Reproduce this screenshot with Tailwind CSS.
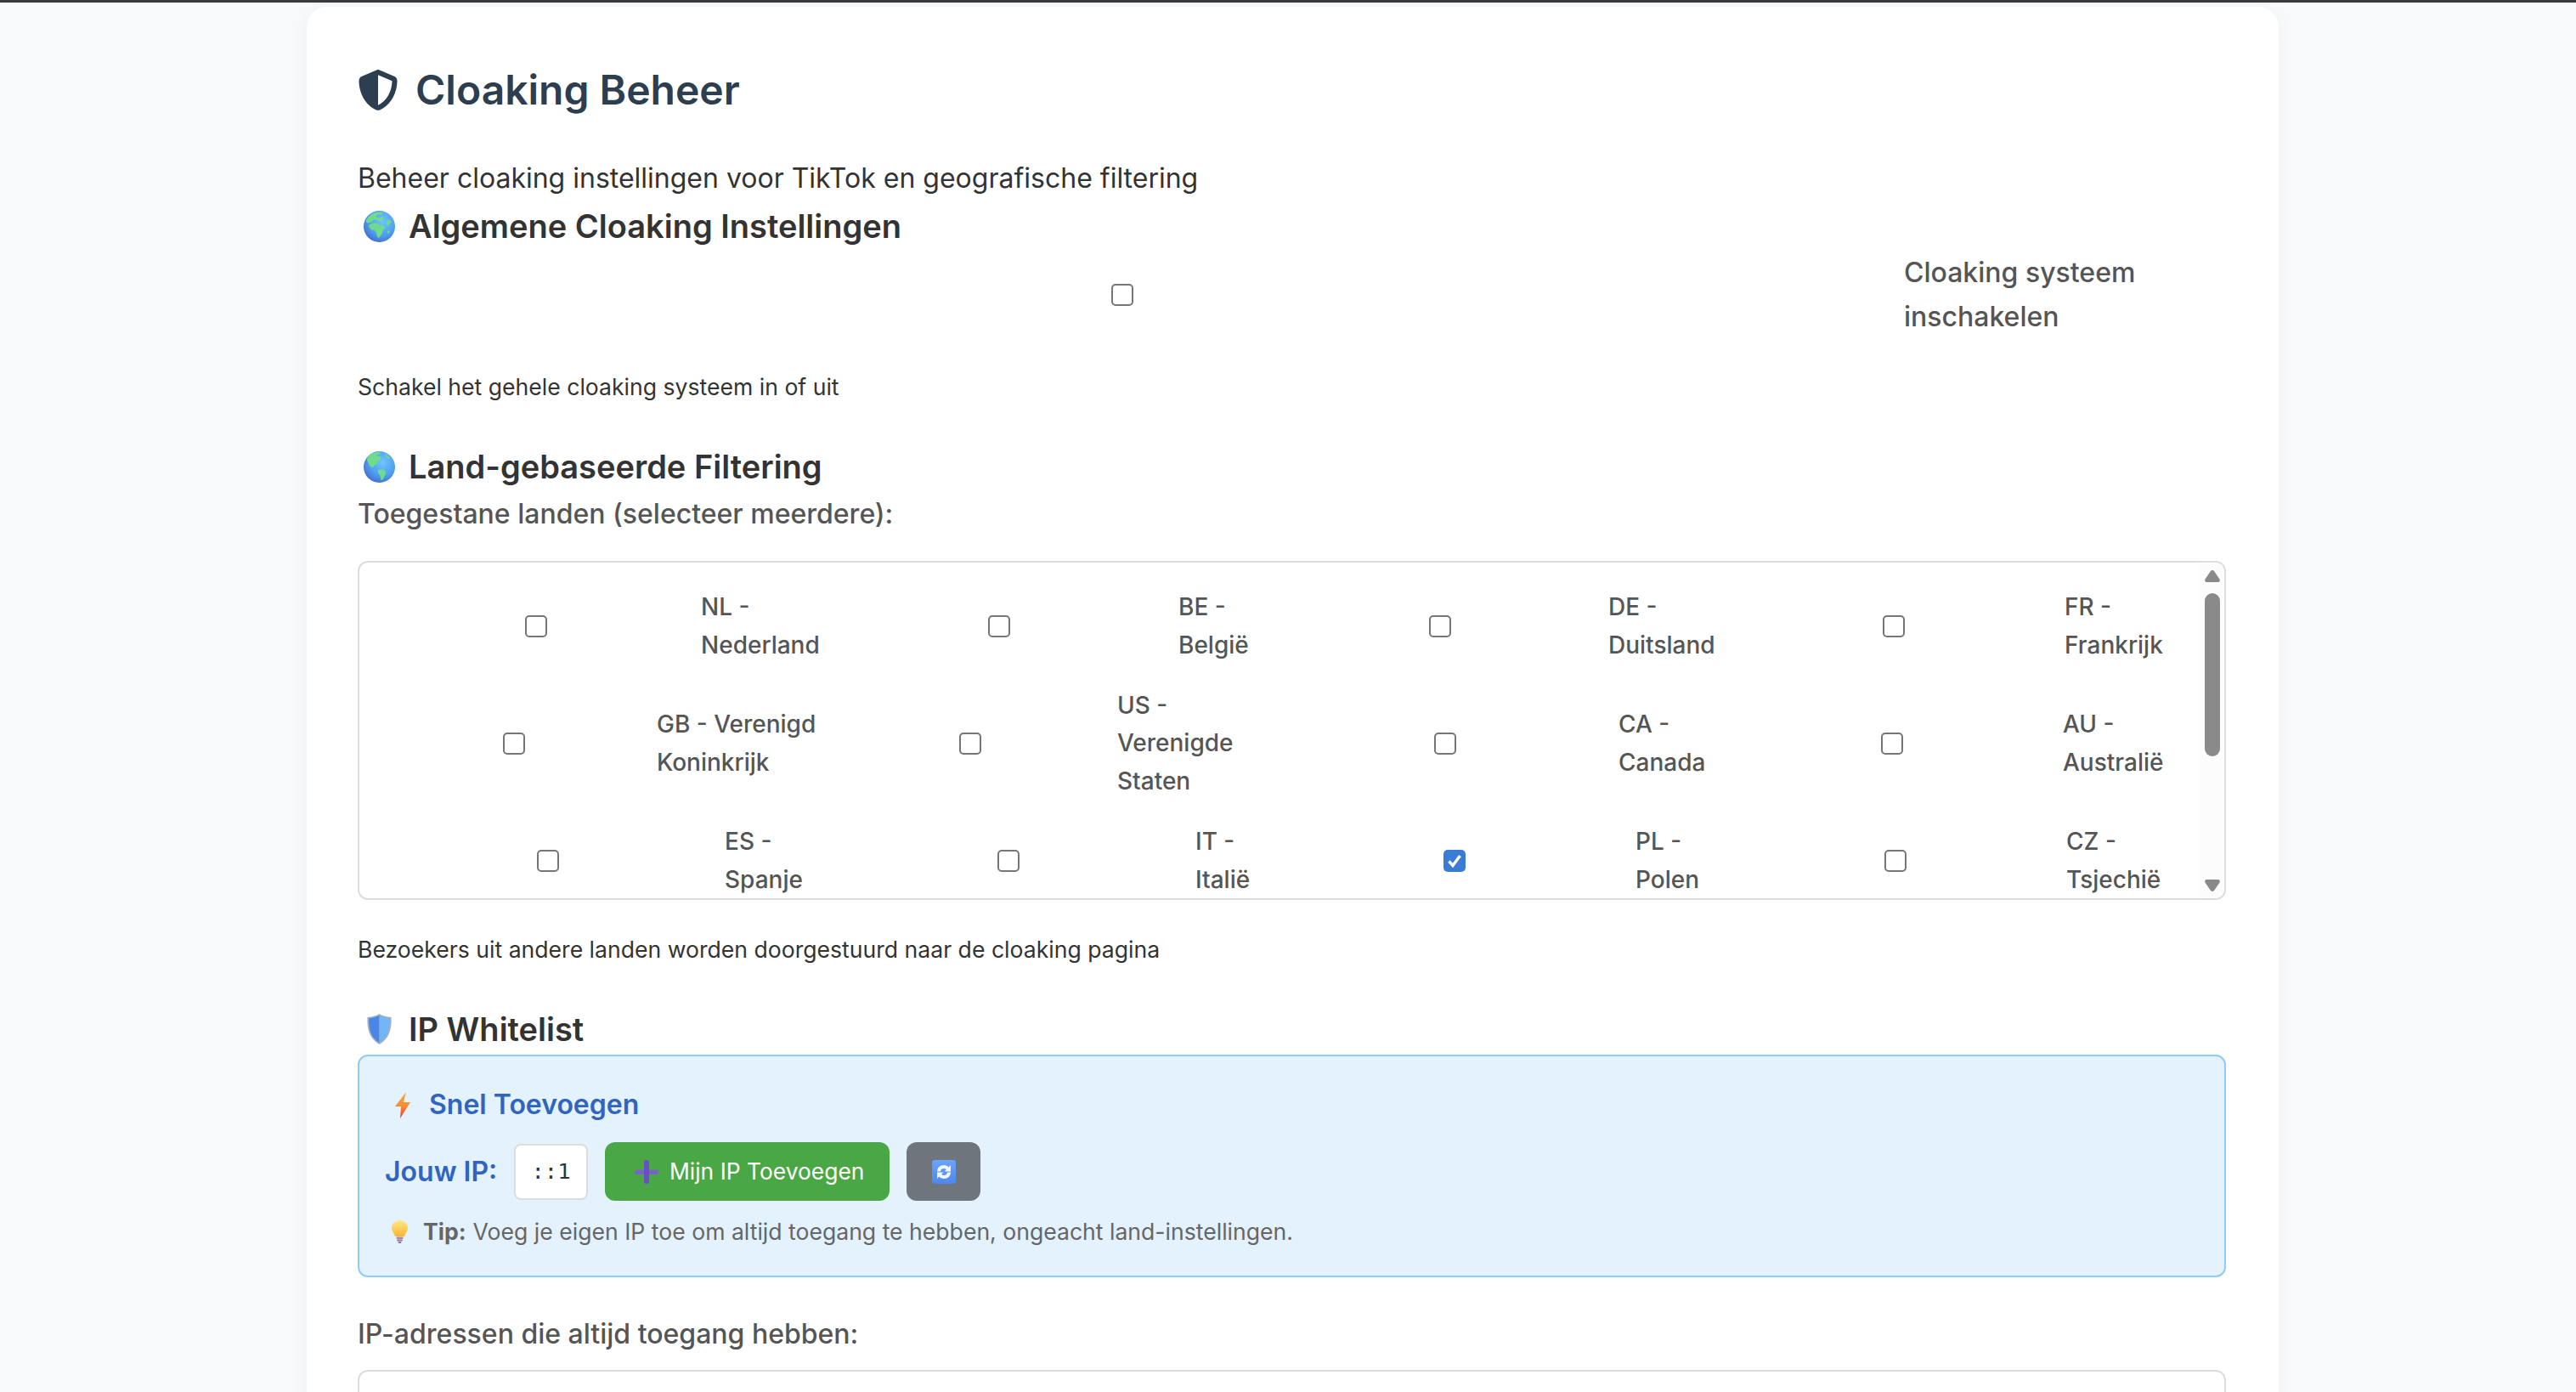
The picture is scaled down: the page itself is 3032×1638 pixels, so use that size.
<!DOCTYPE html>
<html lang="nl">
<head>
    <meta charset="UTF-8">
    <title>Cloaking Beheer</title>
    <script src="https://cdn.jsdelivr.net/npm/@tailwindcss/browser@4"></script>
</head>
<body class="h-[1638px] overflow-hidden bg-[#f8f9fa] font-['Inter',sans-serif]">
    <!-- shared emoji gradients -->
    <svg class="absolute w-0 h-0">
        <defs>
            <radialGradient id="sea" cx="0.6" cy="0.35" r="0.75">
                <stop offset="0" stop-color="#6fc6fb"/><stop offset="0.6" stop-color="#4e9bef"/><stop offset="1" stop-color="#3f62c4"/>
            </radialGradient>
            <linearGradient id="bolt" x1="0" y1="0" x2="0" y2="1">
                <stop offset="0" stop-color="#fbb03b"/><stop offset="0.55" stop-color="#f58a3a"/><stop offset="1" stop-color="#e63d3d"/>
            </linearGradient>
            <linearGradient id="bulb" x1="0" y1="0" x2="0" y2="1">
                <stop offset="0" stop-color="#ffe98a"/><stop offset="1" stop-color="#fbb52e"/>
            </linearGradient>
            <linearGradient id="refresh" x1="0" y1="0" x2="0" y2="1">
                <stop offset="0" stop-color="#6aa5fa"/><stop offset="1" stop-color="#4f86ee"/>
            </linearGradient>
        </defs>
    </svg>

    <div class="h-[3px] bg-[#3a3a3a]"></div>

    <main class="mt-[5px] ml-[361px] w-[2321px] h-[1700px] bg-white rounded-[24px] shadow-[0_4px_20px_rgba(0,0,0,0.04)] pl-[60px] pr-[62px] pt-[68px]">
        <h1 class="flex items-center gap-[20px] h-[60px] text-[48px] leading-[60px] font-semibold text-[#2c3e50]">
            <svg class="w-[48px] h-[48px]" viewBox="0 0 512 512" fill="#2c3e50"><path d="M256 0c4.6 0 9.2 1 13.4 2.9L457.7 82.8c22 9.3 38.4 31 38.3 57.2c-.5 99.2-41.3 280.7-213.6 363.2c-16.7 8-36.1 8-52.8 0C57.3 420.7 16.5 239.2 16 140c-.1-26.2 16.3-47.9 38.3-57.2L242.7 2.9C246.8 1 251.4 0 256 0zm0 66.8V444.8C394 378 431.1 230.1 432 141.4L256 66.8l0 0z"/></svg>
            Cloaking Beheer
        </h1>
        <p class="mt-[48px] text-[32px] leading-[51px] text-[#333]">Beheer cloaking instellingen voor TikTok en geografische filtering</p>

        <h2 class="mt-[7px] flex items-center gap-[16px] pl-[7px] h-[48px] text-[38px] leading-[48px] font-semibold text-[#333]">
            <svg class="w-[37px] h-[37px]" viewBox="0 0 37 37">
                <circle cx="18.5" cy="18.5" r="18.5" fill="url(#sea)"/>
                <path d="M13 2.5c3-1.2 7-1.3 10-.3l-2 2.5-4-.5-3 2.5 3 1.5 5-1 2 2.5-3 2-4 .5-2-2-3 .5-3 3-5 .5-1.500-2C5 7 8.500 4 13 2.500z" fill="#6fdc8c"/>
                <path d="M6 17l5-2.500 5 .5 3 2 4 .5 2 2.500-2 3-1.500 4-3 4.500h-2l-1.500-5-1.500-3.500-4-.5-3-3z" fill="#6fdc8c"/>
                <path d="M27 12l4-1.500 2 3-3 2-1.500 3-1.500-2.500zM28 24l2-1 .5 2.500-2 2z" fill="#6fdc8c"/>
            </svg>
            Algemene Cloaking Instellingen
        </h2>

        <label class="mt-[5px] flex items-center gap-[20px] text-[32px] leading-[52px] font-medium text-[#555]">
            <span class="w-[1800px] flex justify-center"><input type="checkbox" class="appearance-none w-[26px] h-[26px] bg-white border-2 border-[#767676] rounded-[5px]"></span>
            <span class="w-[330px]">Cloaking systeem inschakelen</span>
        </label>
        <p class="mt-[34px] text-[26.6px] leading-[45px] text-[#333]">Schakel het gehele cloaking systeem in of uit</p>

        <h2 class="mt-[47px] flex items-center gap-[16px] pl-[7px] h-[48px] text-[38px] leading-[48px] font-semibold text-[#333]">
            <svg class="w-[37px] h-[37px]" viewBox="0 0 37 37">
                <circle cx="18.500" cy="18.500" r="18.500" fill="url(#sea)"/>
                <path d="M5 6l5-3.500 6-1.500 5 .5-2 2-4 .5 1.500 2 2-.5 2 1.500-1 3-3 2-.5 3-3.500 1.500-1.500 3-3-1.500-2.500-4-1.500-4z" fill="#6fdc8c"/>
                <path d="M17 22l4-1 4 1.500 1.500 3-2 4-2 4-2 .5-1-5-2.500-4z" fill="#6fdc8c"/>
                <path d="M25 3l3 2 4 4-3-.5-3-2.500z" fill="#6fdc8c"/>
            </svg>
            Land-gebaseerde Filtering
        </h2>
        <p class="mt-[6px] text-[32px] leading-[51px] font-medium text-[#555]">Toegestane landen (selecteer meerdere):</p>

        <!-- countries; the column widths differ per row, like in the original -->
        <div class="relative mt-[30px] h-[399px] overflow-hidden border-2 border-[#dddddd] rounded-[12px] pt-[30px] text-[28px] leading-[44.8px] font-medium text-[#555] flex flex-col gap-[26px]">
            <div class="ml-[13px] grid items-center justify-items-start grid-cols-[389px_140px_422px_110px_396px_135px_402px_140px]">
                <input type="checkbox" class="appearance-none w-[26px] h-[26px] bg-white border-2 border-[#767676] rounded-[5px] justify-self-center"><span>NL - Nederland</span>
                <input type="checkbox" class="appearance-none w-[26px] h-[26px] bg-white border-2 border-[#767676] rounded-[5px] justify-self-center"><span>BE - België</span>
                <input type="checkbox" class="appearance-none w-[26px] h-[26px] bg-white border-2 border-[#767676] rounded-[5px] justify-self-center"><span>DE - Duitsland</span>
                <input type="checkbox" class="appearance-none w-[26px] h-[26px] bg-white border-2 border-[#767676] rounded-[5px] justify-self-center"><span>FR - Frankrijk</span>
            </div>
            <div class="ml-[13px] grid items-center justify-items-start grid-cols-[337px_195px_347px_182px_408px_121px_402px_150px]">
                <input type="checkbox" class="appearance-none w-[26px] h-[26px] bg-white border-2 border-[#767676] rounded-[5px] justify-self-center"><span>GB - Verenigd Koninkrijk</span>
                <input type="checkbox" class="appearance-none w-[26px] h-[26px] bg-white border-2 border-[#767676] rounded-[5px] justify-self-center"><span>US - Verenigde Staten</span>
                <input type="checkbox" class="appearance-none w-[26px] h-[26px] bg-white border-2 border-[#767676] rounded-[5px] justify-self-center"><span>CA - Canada</span>
                <input type="checkbox" class="appearance-none w-[26px] h-[26px] bg-white border-2 border-[#767676] rounded-[5px] justify-self-center"><span>AU - Australië</span>
            </div>
            <div class="ml-[13px] grid items-center justify-items-start grid-cols-[417px_114px_440px_92px_426px_105px_402px_140px]">
                <input type="checkbox" class="appearance-none w-[26px] h-[26px] bg-white border-2 border-[#767676] rounded-[5px] justify-self-center"><span>ES - Spanje</span>
                <input type="checkbox" class="appearance-none w-[26px] h-[26px] bg-white border-2 border-[#767676] rounded-[5px] justify-self-center"><span>IT - Italië</span>
                <span class="relative w-[26px] h-[26px] justify-self-center">
                    <input type="checkbox" checked class="appearance-none block w-[26px] h-[26px] bg-[#3a7bd5] rounded-[5px]">
                    <svg class="absolute inset-0 w-[26px] h-[26px]" viewBox="0 0 26 26" fill="none"><path d="M6.500 13.500l4.500 5L19.500 7" stroke="#fff" stroke-width="3.400"/></svg>
                </span><span>PL - Polen</span>
                <input type="checkbox" class="appearance-none w-[26px] h-[26px] bg-white border-2 border-[#767676] rounded-[5px] justify-self-center"><span>CZ - Tsjechië</span>
            </div>
            <!-- scrollbar -->
            <div class="absolute top-0 right-0 bottom-0 w-[29px] bg-[#fcfcfc]">
                <svg class="absolute left-[6px] top-[9px] w-[18px] h-[14px]" viewBox="0 0 18 14" fill="#8a8a8a"><path d="M9 0c1 0 1.800.6 2.400 1.400L17.500 10.500c.9 1.400 0 3.500-1.500 3.500H2c-1.500 0-2.400-2.100-1.500-3.500L6.600 1.400C7.200.6 8 0 9 0z"/></svg>
                <div class="absolute left-[6px] top-[36px] w-[18px] h-[192px] rounded-full bg-[#8a8a8a]"></div>
                <svg class="absolute left-[6px] top-[373px] w-[18px] h-[14px]" viewBox="0 0 18 14" fill="#8a8a8a"><path d="M9 14c-1 0-1.800-.6-2.400-1.400L.5 3.500C-.4 2.100.5 0 2 0h14c1.500 0 2.400 2.100 1.500 3.500l-6.100 9.100C10.800 13.400 10 14 9 14z"/></svg>
            </div>
        </div>
        <p class="mt-[36px] text-[26.6px] leading-[45px] text-[#333]">Bezoekers uit andere landen worden doorgestuurd naar de cloaking pagina</p>

        <h2 class="mt-[47px] flex items-center gap-[20px] pl-[11px] h-[48px] text-[38px] leading-[48px] font-semibold text-[#333]">
            <svg class="w-[29px] h-[36px]" viewBox="0 0 29 36">
                <path d="M14.500 0c3 2 8 3.500 14 4 .8 13-2 25-14 32C2.500 29-.3 17 .5 4c6-.5 11-2 14-4z" fill="#a8aebd"/>
                <path d="M14.500 1.800c-3 1.700-7 3-12.300 3.500-.5 11.500 2 23 12.300 28.700z" fill="#4a86ea"/>
                <path d="M14.500 1.800c3 1.700 7 3 12.300 3.500.5 11.500-2 23-12.300 28.700z" fill="#72b5f7"/>
            </svg>
            IP Whitelist
        </h2>

        <section class="mt-[6px] h-[262px] border-2 border-[#90caf9] rounded-[12px] bg-[#e3f2fd] pl-[30px] pt-[37px]">
            <h3 class="flex items-center gap-[22px] pl-[12px] h-[40px] text-[32px] leading-[40px] font-semibold text-[#3064c0]">
                <svg class="w-[18px] h-[31px]" viewBox="0 0 18 31"><path d="M13 0L0 17h7L6 31 18 12h-8z" fill="url(#bolt)"/></svg>
                Snel Toevoegen
            </h3>
            <div class="mt-[24px] flex items-center h-[69px] ">
                <span class="w-[152px] text-[32px] font-semibold text-[#3064c0]">Jouw IP:</span>
                <code class="flex items-center justify-center w-[87px] h-[66px] bg-white border-2 border-[#dddddd] rounded-[8px] font-['DejaVu_Sans_Mono',monospace] text-[25.6px] text-[#333]">::1</code>
                <button class="ml-[20px] flex items-center gap-[13px] pl-[35px] w-[335px] h-[69px] rounded-[12px] bg-[#4aa745] text-[26.4px] text-white">
                    <svg class="w-[28px] h-[28px]" viewBox="0 0 28 28"><rect x="0" y="11.500" width="28" height="5.500" rx="2.700" fill="#7a62c8"/><rect x="11" y="0" width="6" height="28" rx="3" fill="#6a4fc0"/></svg>
                    Mijn IP Toevoegen
                </button>
                <button class="ml-[20px] flex items-center justify-center w-[87px] h-[69px] rounded-[12px] bg-[#6e757c]">
                    <svg class="w-[28px] h-[28px]" viewBox="0 0 28 28">
                        <rect width="28" height="28" rx="3" fill="url(#refresh)"/>
                        <path d="M6 13.500c0-4.500 3.500-7.500 8-7.500 2.300 0 4.300 1 5.700 2.500L22 6v7.500h-7.500l2.300-2.300c-.7-.8-1.700-1.200-2.800-1.200-2.300 0-4 1.500-4 3.500zM22 14.500c0 4.500-3.500 7.500-8 7.500-2.300 0-4.300-1-5.700-2.500L6 22v-7.500h7.500l-2.300 2.300c.7.8 1.700 1.200 2.800 1.200 2.300 0 4-1.500 4-3.500z" fill="#f2f6ff"/>
                    </svg>
                </button>
            </div>
            <p class="mt-[16px] flex items-center pl-[8px] text-[26.6px] leading-[40px] text-[#666]">
                <svg class="w-[19px] h-[27px] mr-[18px]" viewBox="0 0 19 27">
                    <path d="M9.500 0C4.200 0 0 4 0 9c0 3.500 2.500 5.500 3.500 8.500.3 1 .8 1.500 1.500 1.500h9c.7 0 1.200-.5 1.500-1.500C16.500 14.500 19 12.500 19 9c0-5-4.200-9-9.500-9z" fill="url(#bulb)"/>
                    <rect x="5.500" y="19.500" width="8" height="2.500" rx="1" fill="#a48ab0"/><rect x="6" y="22.500" width="7" height="2" rx="1" fill="#8f7a9c"/><rect x="7.500" y="25" width="4" height="2" rx="1" fill="#8f7a9c"/>
                </svg>
                <strong class="font-bold mr-[8px]">Tip:</strong> Voeg je eigen IP toe om altijd toegang te hebben, ongeacht land-instellingen.
            </p>
        </section>

        <p class="mt-[41px] text-[32px] leading-[51px] font-medium text-[#555]">IP-adressen die altijd toegang hebben:</p>
        <div class="mt-[17px] h-[300px] border-2 border-[#dddddd] rounded-[12px] bg-white"></div>
    </main>
</body>
</html>
